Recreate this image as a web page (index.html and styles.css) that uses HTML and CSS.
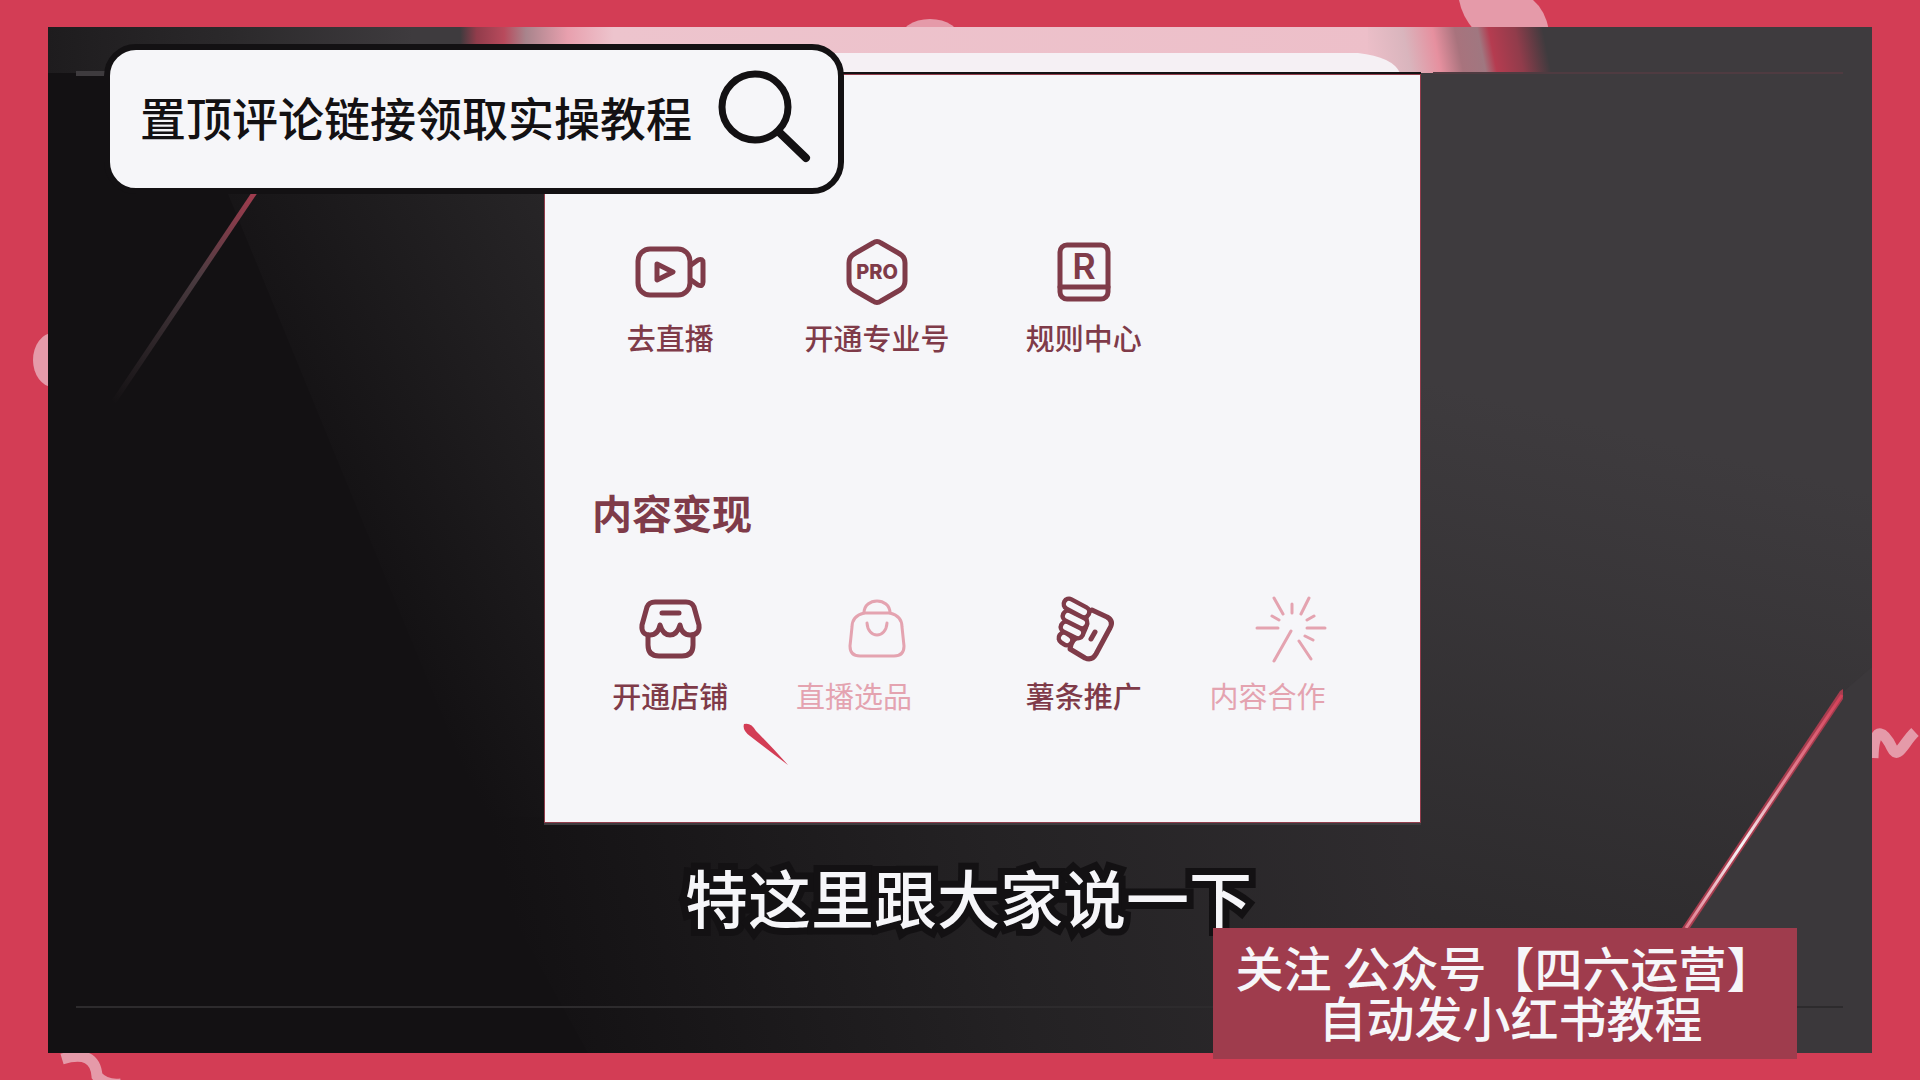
FILE: index.html
```html
<!DOCTYPE html>
<html lang="zh-CN">
<head>
<meta charset="utf-8">
<meta name="viewport" content="width=device-width, initial-scale=1">
<title>内容变现</title>
<link rel="stylesheet" href="styles.css">
</head>
<body>
<div class="page">
  <svg class="doodles" viewBox="0 0 1920 1080" preserveAspectRatio="none" aria-hidden="true">
    <ellipse cx="930" cy="40" rx="31" ry="21"/>
    <path d="M1459 0H1533Q1545 10 1549 30H1474Q1462 16 1459 0Z"/>
    <ellipse cx="53" cy="360" rx="20" ry="27"/>
    <path class="squiggle" d="M62 1059Q95 1049 97 1076Q106 1086 121 1084"/>
    <path class="squiggle" d="M1873 758C1874 720 1886 735 1892 748S1904 742 1915 732"/>
  </svg>

  <main class="stage">
    <svg class="backdrop" viewBox="0 0 1824 1026" preserveAspectRatio="none" aria-hidden="true">
      <defs>
        <linearGradient id="band" gradientUnits="userSpaceOnUse" x1="0" y1="23" x2="1824" y2="23">
          <stop offset="0" stop-color="#1e1c1e"/>
          <stop offset=".1" stop-color="#2b292b"/>
          <stop offset=".2" stop-color="#3e3b3e"/>
          <stop offset=".226" stop-color="#3e3b3e"/>
          <stop offset=".235" stop-color="#913c4b"/>
          <stop offset=".25" stop-color="#b84a5c"/>
          <stop offset=".262" stop-color="#a8848c"/>
          <stop offset=".285" stop-color="#e8a0ae"/>
          <stop offset=".31" stop-color="#edc4cd"/>
          <stop offset=".73" stop-color="#edbfc9"/>
        </linearGradient>
        <linearGradient id="band-end" gradientUnits="userSpaceOnUse" x1="1320" y1="36" x2="1500" y2="0">
          <stop offset="0" stop-color="#edbfc9"/>
          <stop offset=".22" stop-color="#d9b5bd"/>
          <stop offset=".38" stop-color="#e6909f"/>
          <stop offset=".5" stop-color="#a8737d"/>
          <stop offset=".62" stop-color="#a07780"/>
          <stop offset=".68" stop-color="#b53c50"/>
          <stop offset=".82" stop-color="#913c4b"/>
          <stop offset=".97" stop-color="#3e3b3e"/>
        </linearGradient>
        <linearGradient id="left" gradientUnits="userSpaceOnUse" x1="250" y1="440" x2="600" y2="250">
          <stop offset="0" stop-color="#131113"/>
          <stop offset="1" stop-color="#2a282a"/>
        </linearGradient>
        <linearGradient id="lower" gradientUnits="userSpaceOnUse" x1="480" y1="960" x2="1420" y2="740">
          <stop offset="0" stop-color="#131113"/>
          <stop offset=".5" stop-color="#242224"/>
          <stop offset="1" stop-color="#312e31"/>
        </linearGradient>
        <linearGradient id="right" gradientUnits="userSpaceOnUse" x1="1420" y1="960" x2="1560" y2="400">
          <stop offset="0" stop-color="#2b292b"/>
          <stop offset="1" stop-color="#3e3b3e"/>
        </linearGradient>
        <linearGradient id="beam" gradientUnits="userSpaceOnUse" x1="1795" y1="665" x2="1638" y2="901">
          <stop offset="0" stop-color="#d33d55"/>
          <stop offset=".4" stop-color="#e48a9a"/>
          <stop offset=".65" stop-color="#f6f6f9"/>
          <stop offset="1" stop-color="#e07a8c"/>
        </linearGradient>
        <linearGradient id="streak" gradientUnits="userSpaceOnUse" x1="207" y1="167" x2="65" y2="376">
          <stop offset="0" stop-color="#a03c4e"/>
          <stop offset=".4" stop-color="#4a3b40"/>
          <stop offset="1" stop-color="#131113"/>
        </linearGradient>
      </defs>
      <rect width="1824" height="1026" fill="#131113"/>
      <path d="M130 45H510V800H440Z" fill="url(#left)"/>
      <path d="M410 790H1380V1026H540Z" fill="url(#lower)"/>
      <path d="M1372 0H1824V1026H1372Z" fill="url(#right)"/>
      <path d="M1795 665L1555 1026H1824V640Z" fill="#3b383b"/>
      <rect width="1340" height="46" fill="url(#band)"/>
      <rect x="1320" width="504" height="46" fill="url(#band-end)"/>
      <path d="M780 26H1310Q1345 30 1352 46H780Z" fill="#f5f0f4"/>
      <rect x="28" y="44" width="30" height="5" fill="#3e3b3e"/>
      <rect x="1385" y="45" width="410" height="2" fill="#4f3b41"/>
      <rect x="28" y="979" width="1767" height="2" fill="#2d2b2d"/>
      <path d="M207 165L65 376" stroke="url(#streak)" stroke-width="5"/>
      <path d="M1792 664L1795 662V672L1642 901H1634Z" fill="#a83c4e"/>
      <path d="M1794 668L1638 901" stroke="url(#beam)" stroke-width="3"/>
    </svg>

    <form class="search" onsubmit="return false">
      <input class="search-text" type="text" aria-label="搜索" value="置顶评论链接领取实操教程">
      <button class="search-button" type="submit" aria-label="搜索">
        <svg viewBox="0 0 100 100" width="100" height="100" aria-hidden="true">
          <circle cx="43" cy="41" r="33"/>
          <path class="handle" d="M67 66L94 92"/>
        </svg>
      </button>
    </form>

    <section class="panel">
      <div class="grid">
        <button class="item" type="button">
          <svg class="icon" viewBox="0 0 80 80" aria-hidden="true">
            <rect x="8" y="18" width="52" height="46" rx="12"/>
            <path d="M61 34L68 29Q73 27 73 32V51Q73 56 68 54L61 49"/>
            <path d="M27 33L43 41L27 49Z"/>
          </svg>
          <span class="label">去直播</span>
        </button>
        <button class="item" type="button">
          <svg class="icon" viewBox="0 0 80 80" aria-hidden="true">
            <path d="M36 12Q40 9 44 12L63 23Q68 26 68 32V50Q68 56 63 59L44 70Q40 73 36 70L17 59Q12 56 12 50V32Q12 26 17 23Z"/>
            <text class="pro" x="40" y="48">PRO</text>
          </svg>
          <span class="label">开通专业号</span>
        </button>
        <button class="item" type="button">
          <svg class="icon" viewBox="0 0 80 80" aria-hidden="true">
            <rect x="16" y="14" width="48" height="54" rx="7"/>
            <path d="M16 56H64"/>
            <text class="rule" x="40" y="48">R</text>
          </svg>
          <span class="label">规则中心</span>
        </button>
      </div>

      <h2 class="title">内容变现</h2>

      <div class="grid">
        <button class="item" type="button">
          <svg class="icon" viewBox="0 0 80 80" aria-hidden="true">
            <path d="M25 13H56Q62 13 64 18L69 36Q70 46 60 46Q52 46 50 36Q47 46 40 46Q33 46 30 36Q28 46 20 46Q11 46 12 36L17 18Q19 13 25 13Z"/>
            <path d="M18 46V56Q18 67 29 67H52Q63 67 63 56V46M32 24H49"/>
          </svg>
          <span class="label">开通店铺</span>
        </button>
        <button class="item" type="button" disabled>
          <svg class="icon" viewBox="0 0 80 80" aria-hidden="true">
            <path d="M27 24Q15 27 15 38L13 57Q13 67 23 67H57Q67 67 67 57L65 38Q65 27 53 24"/>
            <path d="M27 24C27 8 53 8 53 24ZM30 34C31 50 49 50 50 34"/>
          </svg>
          <span class="label">直播选品</span>
        </button>
        <button class="item" type="button">
          <svg class="icon" viewBox="0 0 80 80" aria-hidden="true">
            <path d="M48 21L63 28Q70 32 66 39L52 65Q48 72 41 69L26 60Q27 50 37 46Q44 40 42 28Q43 22 48 21Z"/>
            <path class="finger" d="M25 15L40 23M24 27L38 34M22 38L34 44M20 49L23 51"/>
            <path class="finger-inner" d="M25 15L40 23M24 27L38 34M22 38L34 44M20 49L23 51"/>
            <path d="M51 43L47 50"/>
          </svg>
          <span class="label">薯条推广</span>
        </button>
        <button class="item" type="button" disabled>
          <svg class="icon" viewBox="0 0 80 80" aria-hidden="true">
            <path d="M23 9L32 25M41 15V24M58 9L50 25M21 27L28 31M63 27L56 31M6 39H27M56 39H74M54 47L62 51M48 52L60 70M40 42L23 72"/>
          </svg>
          <span class="label">内容合作</span>
        </button>
      </div>

      <svg class="pointer" viewBox="0 0 48 44" width="48" height="44" aria-hidden="true">
        <path d="M2 2Q9 0 14 9Q30 25 46 43Q22 25 8 14Q0 8 2 2Z"/>
      </svg>
    </section>

    <p class="caption">特这里跟大家说一下</p>

    <p class="notice">关注 公众号【四六运营】
 自动发小红书教程</p>
  </main>
</div>
</body>
</html>
```
FILE: styles.css
```css
:root {
  --red: #d33d55;
  --ink: #131113;
  --gray: #3e3b3e;
  --paper: #f6f6f9;
  --line: #7f3b49;
  --faded: #e4a3b0;
}

* { box-sizing: border-box; }

body {
  margin: 0;
  background: var(--red);
  font-family: "Noto Sans CJK SC", sans-serif;
}

button, input {
  font: inherit;
  color: inherit;
  border: 0;
  padding: 0;
  background: none;
}

.page {
  position: relative;
  display: flex;
  min-height: 100vh;
  padding: 27px 48px;
}

.doodles {
  position: absolute;
  inset: 0;
  width: 100%;
  height: 100%;
  fill: #e59aa9;
}

.squiggle {
  fill: none;
  stroke: #e59aa9;
  stroke-width: 11;
}

.stage {
  position: relative;
  flex: 1;
  display: grid;
  grid-template-columns: 497fr 875fr 452fr;
  grid-template-rows: auto 1fr;
  padding-top: 48px;
}

.backdrop {
  position: absolute;
  inset: 0;
  width: 100%;
  height: 100%;
}

.search {
  position: absolute;
  z-index: 2;
  left: 56px;
  top: 17px;
  display: flex;
  align-items: center;
  width: 740px;
  height: 150px;
  padding: 0 0 6px 30px;
  border: 6px solid var(--ink);
  border-radius: 32px;
  background: var(--paper);
  color: var(--ink);
}

.search-text {
  width: 572px;
  height: 68px;
  font-size: 46px;
  font-weight: 500;
}

.search-button svg {
  display: block;
  fill: none;
  stroke: var(--ink);
  stroke-width: 7;
  stroke-linecap: round;
}

.handle { stroke-width: 8; }

.panel {
  position: relative;
  grid-column: 2;
  padding: 156px 26px 109px 22px;
  background: var(--paper);
  box-shadow: 0 0 0 1px #913c4b, 0 -2px 0 1px var(--ink), 0 2px 0 1px var(--gray);
  color: var(--line);
}

.grid {
  display: grid;
  grid-template-columns: repeat(4, 1fr);
}

.item {
  display: flex;
  flex-direction: column;
  align-items: center;
  gap: 8px;
}

.icon {
  width: 80px;
  height: 80px;
  fill: none;
  stroke: currentColor;
  stroke-width: 5;
  stroke-linecap: round;
  stroke-linejoin: round;
}

.icon text {
  fill: currentColor;
  stroke: none;
  text-anchor: middle;
  font-family: Inter, sans-serif;
}

.pro { font-size: 20px; font-weight: 800; }
.rule { font-size: 36px; font-weight: 600; }

.icon .finger { stroke-width: 15; }
.icon .finger-inner { stroke: var(--paper); stroke-width: 6; }

.label {
  font-size: 29px;
  line-height: 36px;
  font-weight: 500;
  white-space: nowrap;
}

.item:disabled { color: var(--faded); }
.item:disabled .icon { stroke-width: 3; }
.item:disabled .label { padding-right: 46px; font-weight: 400; }

.title {
  margin: 133px 0 53px 25px;
  font-size: 40px;
  line-height: 48px;
  font-weight: 700;
}

.pointer {
  position: absolute;
  left: 197px;
  top: 647px;
  fill: var(--red);
}

.caption {
  position: relative;
  grid-column: 2;
  margin: 28px 0 0 140px;
  font-size: 63px;
  line-height: 92px;
  font-weight: 500;
  white-space: nowrap;
  color: var(--paper);
  -webkit-text-stroke: 14px var(--ink);
  paint-order: stroke fill;
}

.notice {
  position: absolute;
  z-index: 3;
  right: 75px;
  bottom: -6px;
  width: 584px;
  margin: 0;
  padding: 13px 0 18px;
  background: #9f3c4d;
  color: var(--paper);
  font-size: 48px;
  line-height: 50px;
  font-weight: 500;
  text-align: center;
  white-space: pre;
}
```
